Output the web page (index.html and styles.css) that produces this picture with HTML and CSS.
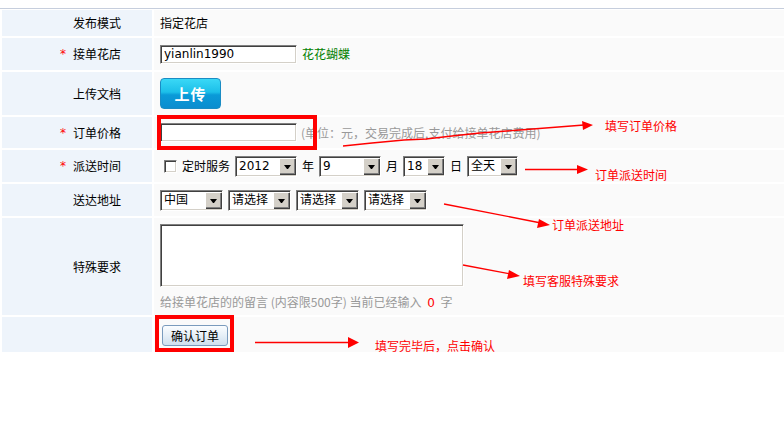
FILE: index.html
```html
<!DOCTYPE html>
<html lang="zh-CN">
<head>
    <meta charset="UTF-8">
    <title>提交订单</title>
    <link rel="stylesheet" href="styles.css">
</head>
<body>
    <div class="page">
        <form class="order-form">
            <div class="label">发布模式</div>
            <div class="value">指定花店</div>

            <div class="label"><span class="star">*</span>接单花店</div>
            <div class="value">
                <input type="text" class="text-input" value="yianlin1990">
                <span class="shop-name">花花蝴蝶</span>
            </div>

            <div class="label">上传文档</div>
            <div class="value">
                <button type="button" class="upload-btn">上传</button>
            </div>

            <div class="label"><span class="star">*</span>订单价格</div>
            <div class="value">
                <input type="text" class="text-input">
                <span class="tip">(单位：元，交易完成后,支付给接单花店费用)</span>
            </div>

            <div class="label"><span class="star">*</span>派送时间</div>
            <div class="value row-time">
                <input type="checkbox" class="check">
                <span>定时服务</span>
                <span class="drop w62"><select><option>2012</option></select></span>
                <span>年</span>
                <span class="drop w62"><select><option>9</option></select></span>
                <span>月</span>
                <span class="drop w42"><select><option>18</option></select></span>
                <span>日</span>
                <span class="drop w51"><select><option>全天</option></select></span>
            </div>

            <div class="label">送达地址</div>
            <div class="value row-area">
                <span class="drop w63"><select><option>中国</option></select></span>
                <span class="drop w63"><select><option>请选择</option></select></span>
                <span class="drop w63"><select><option>请选择</option></select></span>
                <span class="drop w63"><select><option>请选择</option></select></span>
            </div>

            <div class="label">特殊要求</div>
            <div class="value row-note">
                <textarea class="note-box"></textarea>
                <p class="note-hint">给接单花店的的留言 (内容限500字) 当前已经输入 <span class="count">0</span> 字</p>
            </div>

            <div class="label"></div>
            <div class="value">
                <button type="submit" class="confirm-btn">确认订单</button>
            </div>
        </form>

        <!-- annotations drawn over the form -->
        <div class="mark mark-price"></div>
        <div class="mark mark-confirm"></div>

        <svg class="arrows" width="784" height="423" viewBox="0 0 784 423">
            <g fill="none" stroke="#f00" stroke-width="1.3">
                <polyline points="343,146 372,143 404,140 426,139 452,136 480,133 520,130 584,125"/>
                <line x1="525" y1="169.5" x2="580" y2="169.5"/>
                <line x1="444" y1="204" x2="541" y2="223"/>
                <line x1="463" y1="265" x2="511" y2="274"/>
                <line x1="255" y1="342.5" x2="350" y2="342.5"/>
            </g>
            <g fill="#f00">
                <polygon points="582,121 593,125 583,130"/>
                <polygon points="577,165 588,169.5 577,174"/>
                <polygon points="539,219 550,225 537,228"/>
                <polygon points="509,270 520,276 507,279"/>
                <polygon points="348,337 359,342.5 348,348"/>
            </g>
        </svg>

        <span class="note note-price">填写订单价格</span>
        <span class="note note-time">订单派送时间</span>
        <span class="note note-area">订单派送地址</span>
        <span class="note note-extra">填写客服特殊要求</span>
        <span class="note note-confirm">填写完毕后，点击确认</span>
    </div>
</body>
</html>
```

FILE: styles.css
```css
body {
    margin: 0;
    background: #fff;
    font-family: "DejaVu Sans", "Noto Sans CJK SC", sans-serif;
    font-size: 12px;
    color: #000;
}
.page {
    position: relative;
    width: 784px;
    height: 423px;
    padding-top: 8px;
    box-sizing: border-box;
}
.order-form {
    display: grid;
    grid-template-columns: 150px 1fr;
    grid-template-rows: 26px 32px 43px 31px 32px 32px 97px 35px;
    gap: 2px;
    margin: 0;
    padding: 1px 0 0 2px;
    border-top: 1px solid #c6cedd;
}
.label {
    display: flex;
    align-items: center;
    justify-content: flex-end;
    padding-right: 31px;
    background: #eef4fb;
    font-family: "Noto Sans CJK SC", sans-serif;
    line-height: 14px;
}
.star {
    color: #f00;
    margin-right: 7px;
    font-family: "DejaVu Sans", sans-serif;
}
.value {
    display: flex;
    align-items: center;
    padding-left: 6px;
    background: #fafafa;
    line-height: 14px;
    font-family: "Noto Sans CJK SC", sans-serif;
}

/* classic sunken inputs */
.text-input, .note-box {
    box-sizing: border-box;
    border: 1px solid;
    border-color: #808080 #fff #fff #808080;
    box-shadow: inset 1px 1px 0 #404040, inset -1px -1px 0 #d4d0c8;
    background: #fff;
    outline: none;
    font-family: "DejaVu Sans", sans-serif;
    font-size: 12px;
}
.text-input {
    width: 137px;
    height: 19px;
    padding: 0 3px;
    margin: 0;
}
.shop-name {
    color: #008000;
    margin-left: 5px;
}
.tip {
    color: #999;
    margin-left: 4px;
}

.upload-btn {
    width: 61px;
    height: 31px;
    padding: 0;
    border: 1px solid #1a8cc4;
    border-radius: 4px;
    background: linear-gradient(#3ad8f6, #1cbfe9 45%, #0a9ad8 55%, #0b8dcf);
    color: #fff;
    font-family: "Noto Sans CJK SC", sans-serif;
    font-size: 15px;
    font-weight: bold;
    letter-spacing: 1px;
    cursor: pointer;
}

.row-time, .row-area {
    gap: 5px;
}
.check {
    appearance: none;
    width: 13px;
    height: 13px;
    margin: 0 0 0 4px;
    border: 1px solid;
    border-color: #808080 #fff #fff #808080;
    box-shadow: inset 1px 1px 0 #404040, inset -1px -1px 0 #d4d0c8;
    background: #fff;
}

/* select with the old grey drop button */
.drop {
    position: relative;
    display: inline-block;
    height: 21px;
}
.drop select {
    appearance: none;
    box-sizing: border-box;
    width: 100%;
    height: 21px;
    margin: 0;
    padding: 0 0 0 3px;
    border: 1px solid;
    border-color: #808080 #fff #fff #808080;
    box-shadow: inset 1px 1px 0 #404040, inset -1px -1px 0 #d4d0c8;
    border-radius: 0;
    background: #fff;
    color: #000;
    font-family: "DejaVu Sans", "Noto Sans CJK SC", sans-serif;
    font-size: 12px;
    outline: none;
}
.drop::after {
    content: "";
    position: absolute;
    top: 2px;
    right: 2px;
    width: 15px;
    height: 15px;
    background: #d4d0c8;
    border-top: 1px solid #fff;
    border-left: 1px solid #fff;
    box-shadow: 1px 1px 0 #404040, inset -1px -1px 0 #808080;
}
.drop::before {
    content: "";
    position: absolute;
    z-index: 1;
    top: 9px;
    right: 6px;
    width: 1px;
    border-top: 4px solid #000;
    border-left: 3px solid transparent;
    border-right: 3px solid transparent;
}
.w42 { width: 42px; }
.w51 { width: 51px; }
.w62 { width: 62px; }
.w63 { width: 63px; }

.row-note {
    flex-direction: column;
    align-items: flex-start;
    padding-top: 6px;
}
.note-box {
    width: 304px;
    height: 63px;
    margin: 0;
    resize: none;
}
.note-hint {
    margin: 8px 0 0;
    color: #999;
}
.count {
    color: #f00;
    margin: 0 3px;
    font-family: "DejaVu Sans", sans-serif;
}

.confirm-btn {
    width: 66px;
    height: 21px;
    margin-left: 2px;
    margin-top: 1px;
    padding: 0;
    border: 1px solid #7a9bbd;
    border-radius: 3px;
    background: linear-gradient(#fbfdff, #e6eff7 50%, #cfdfee);
    color: #000;
    font-family: "Noto Sans CJK SC", sans-serif;
    font-size: 12px;
    cursor: pointer;
}

/* red annotations */
.mark {
    position: absolute;
    box-sizing: border-box;
    border: 4px solid #f00;
}
.mark-price {
    left: 157px;
    top: 115px;
    width: 160px;
    height: 35px;
}
.mark-confirm {
    left: 155px;
    top: 315px;
    width: 79px;
    height: 37px;
}
.arrows {
    position: absolute;
    left: 0;
    top: 0;
    pointer-events: none;
}
.note {
    position: absolute;
    color: #f00;
    font-family: "Noto Sans CJK SC", sans-serif;
    font-size: 12px;
    line-height: 12px;
    white-space: nowrap;
}
.note-price { left: 605px; top: 120px; }
.note-time { left: 595px; top: 169px; }
.note-area { left: 552px; top: 219px; }
.note-extra { left: 523px; top: 275px; }
.note-confirm { left: 375px; top: 340px; }
```
